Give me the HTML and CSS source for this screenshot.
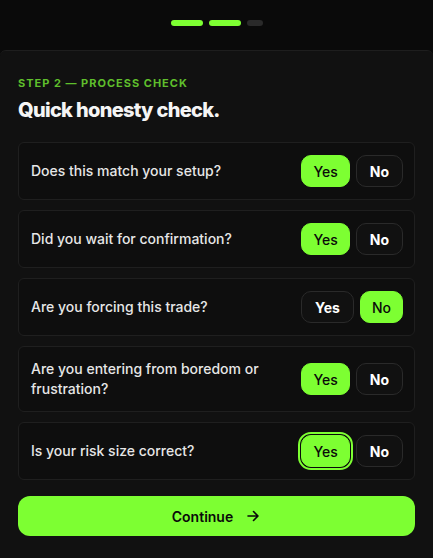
FILE: index.html
```html
<!DOCTYPE html>
<html>
<head>
<meta charset="utf-8">
<link rel="stylesheet" href="styles.css">
</head>
<body>
<header class="top">
  <div class="progress">
    <span class="seg seg-done"></span>
    <span class="seg seg-done"></span>
    <span class="seg seg-todo"></span>
  </div>
</header>
<main class="panel">
  <div class="eyebrow">STEP 2 — PROCESS CHECK</div>
  <h1 class="title">Quick honesty check.</h1>
  <div class="list">
    <div class="card">
      <p class="q">Does this match your setup?</p>
      <div class="choices"><button class="opt on">Yes</button><button class="opt">No</button></div>
    </div>
    <div class="card">
      <p class="q">Did you wait for confirmation?</p>
      <div class="choices"><button class="opt on">Yes</button><button class="opt">No</button></div>
    </div>
    <div class="card">
      <p class="q">Are you forcing this trade?</p>
      <div class="choices"><button class="opt">Yes</button><button class="opt on">No</button></div>
    </div>
    <div class="card">
      <p class="q">Are you entering from boredom or frustration?</p>
      <div class="choices"><button class="opt on">Yes</button><button class="opt">No</button></div>
    </div>
    <div class="card">
      <p class="q">Is your risk size correct?</p>
      <div class="choices"><button class="opt on focus">Yes</button><button class="opt">No</button></div>
    </div>
  </div>
  <button class="continue">Continue
    <svg width="16" height="16" viewBox="0 0 16 16" fill="none" stroke="#0a0a0a" stroke-width="1.6" stroke-linecap="round" stroke-linejoin="round"><path d="M3 8h10M8.5 3.5 13 8l-4.5 4.5"/></svg>
  </button>
</main>
</body>
</html>
```
FILE: styles.css
```css
* { box-sizing: border-box; }
html, body { margin: 0; padding: 0; }
body {
  background: #0a0a0a;
  font-family: Inter, "Noto Sans", sans-serif;
  color: #e8e8e8;
  width: 433px;
  height: 558px;
  overflow: hidden;
}
.top {
  height: 50px;
  display: flex;
  justify-content: center;
  align-items: center;
  padding-bottom: 4px;
}
.progress { display: flex; gap: 6px; }
.seg { display: block; height: 6px; border-radius: 3px; }
.seg-done { width: 32px; background: #7dff32; }
.seg-todo { width: 16px; background: #2a2a2a; }
.panel {
  background: #111111;
  border-top: 1px solid #1e1e1e;
  border-radius: 6px 6px 0 0;
  padding: 24px 18px 0 18px;
  height: 508px;
}
.eyebrow {
  font-size: 11px;
  line-height: 16px;
  font-weight: 700;
  letter-spacing: 1px;
  color: #5fbf2c;
}
.title {
  margin: 7px 0 0 0;
  font-size: 20px;
  line-height: 24px;
  font-weight: 800;
  letter-spacing: -0.7px;
  color: #f5f5f5;
}
.list {
  margin-top: 20px;
  display: flex;
  flex-direction: column;
  gap: 10px;
}
.card {
  display: flex;
  align-items: center;
  gap: 16px;
  padding: 12px 11px 12px 12px;
  border: 1px solid #1f1f1f;
  border-radius: 6px;
  background: #0e0e0e;
}
.q {
  flex: 1;
  margin: 0;
  font-size: 14px;
  line-height: 20px;
  font-weight: 500;
  color: #e6e6e6;
}
.choices { display: flex; gap: 6px; }
.opt {
  height: 32px;
  padding: 0 13px;
  border: 1px solid #2a2a2a;
  border-radius: 10px;
  background: #111111;
  color: #ffffff;
  font-family: Inter, sans-serif;
  font-size: 14px;
  font-weight: 700;
}
.opt.on {
  padding: 0 11px;
  background: #7dff32;
  border-color: #7dff32;
  color: #0a0a0a;
  font-weight: 500;
}
.opt.focus {
  outline: 2px solid #7dff32;
  outline-offset: 1px;
  box-shadow: 0 0 0 1px #0a0a0a;
}
.continue {
  margin-top: 16px;
  width: 100%;
  height: 40px;
  border: none;
  border-radius: 12px;
  background: #7dff32;
  color: #0a0a0a;
  font-family: Inter, sans-serif;
  font-size: 14px;
  font-weight: 600;
  display: flex;
  justify-content: center;
  align-items: center;
  gap: 12px;
}
```
